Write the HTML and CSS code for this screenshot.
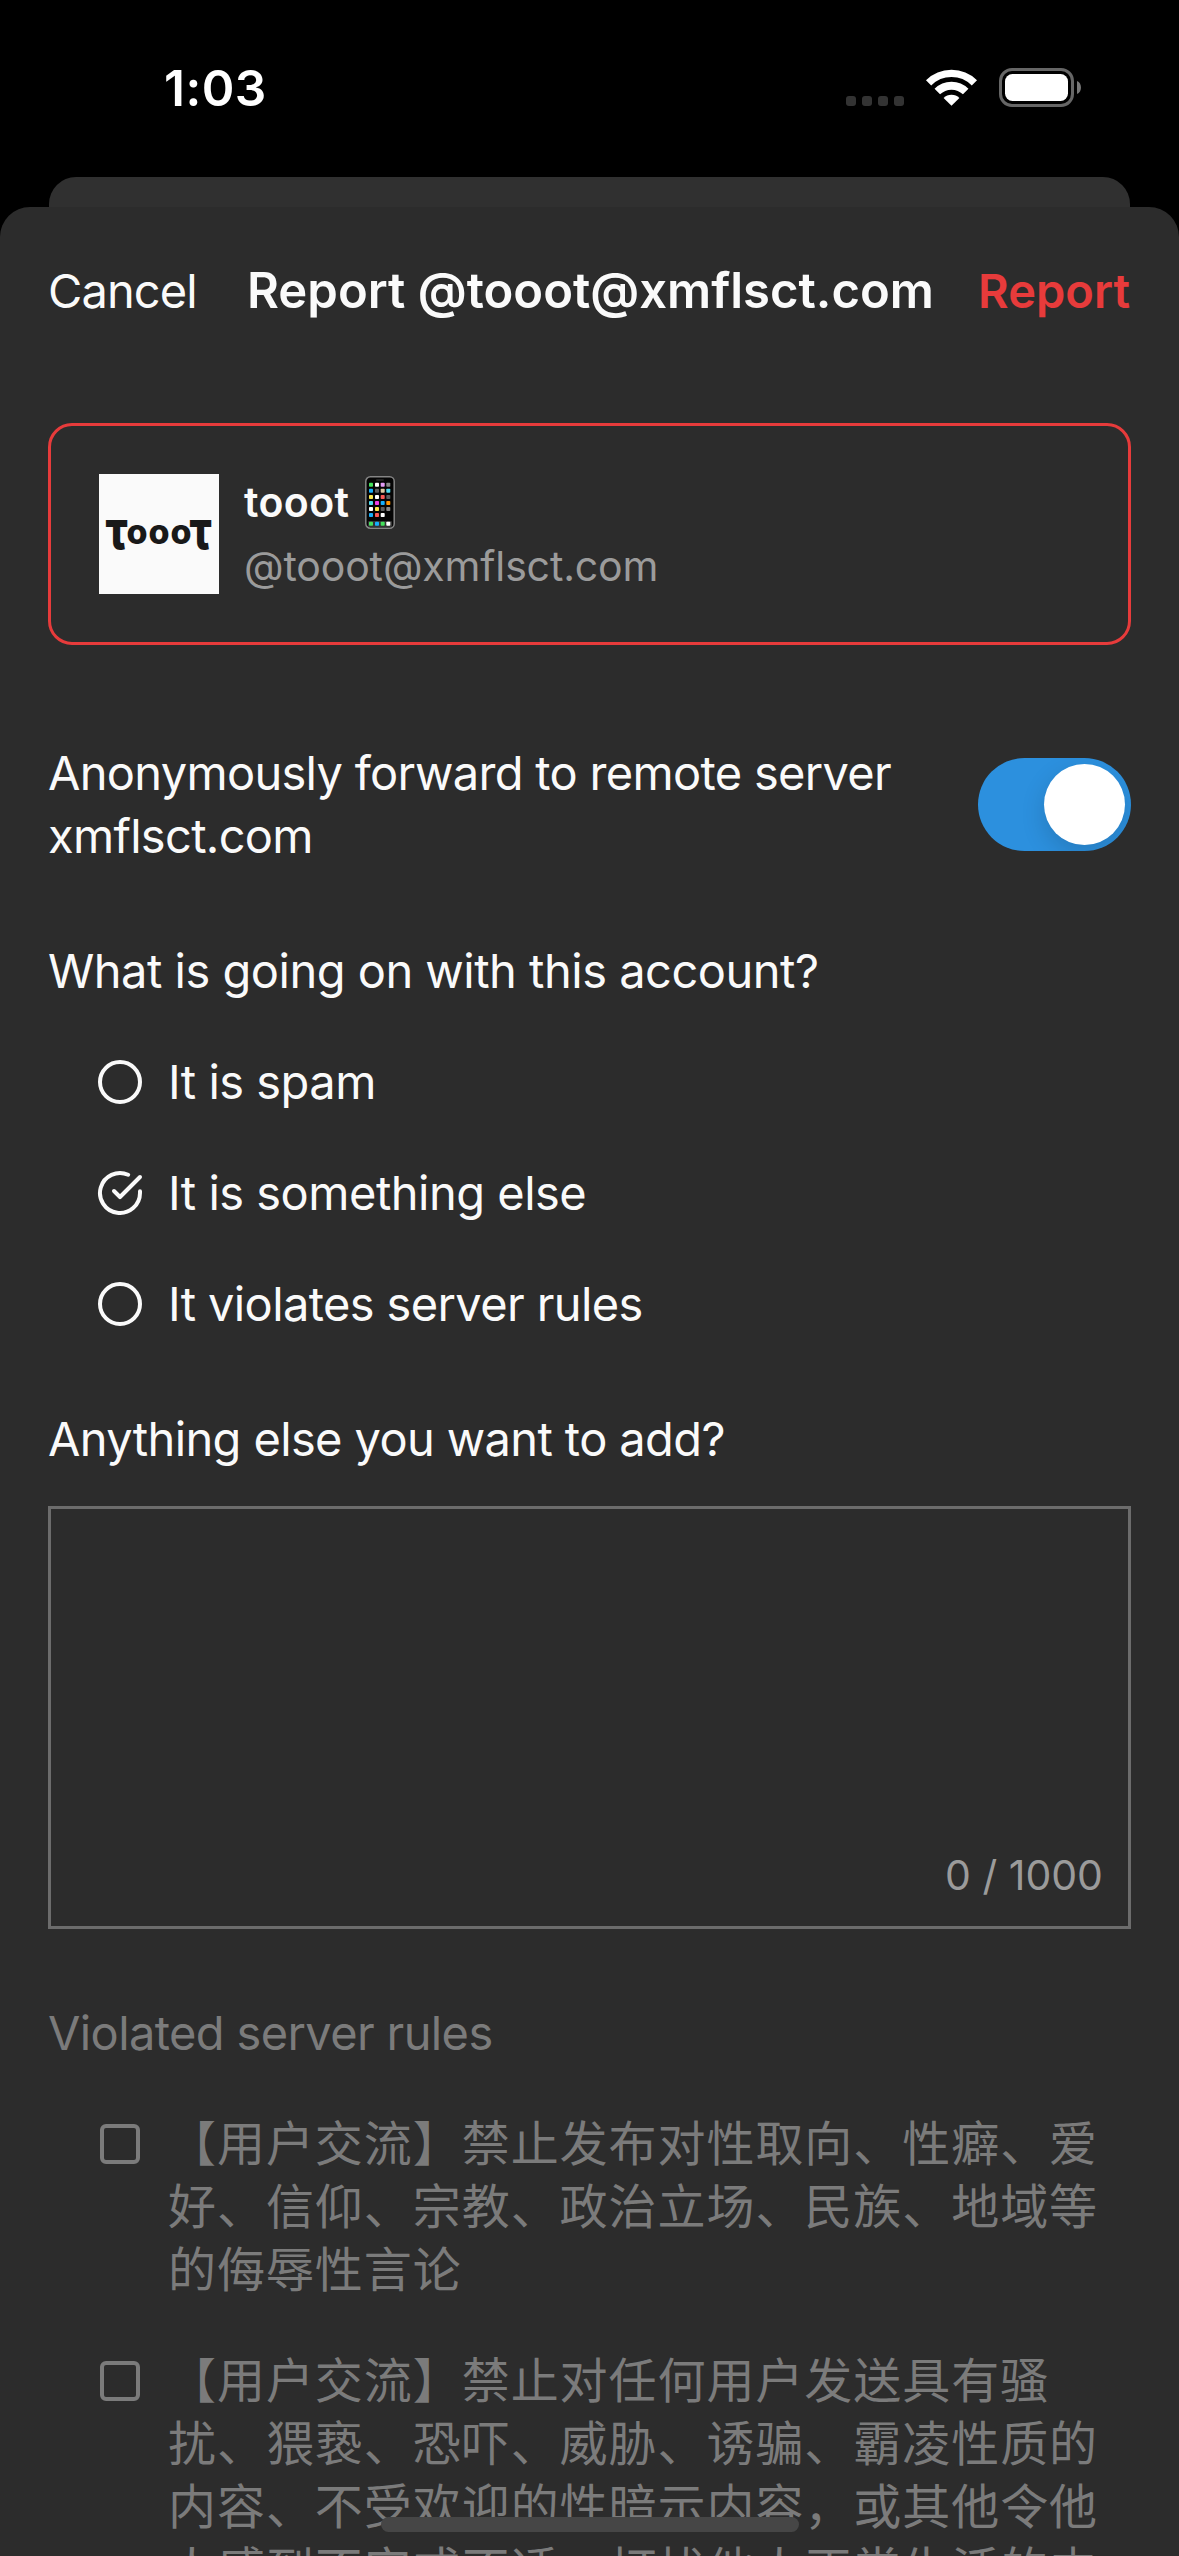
FILE: index.html
```html
<!DOCTYPE html>
<html lang="en">
<head>
<meta charset="utf-8">
<title>Report</title>
<link rel="stylesheet" href="styles.css">
</head>
<body>
<div class="screen">
  <header class="statusbar">
    <span class="time">1:03</span>
    <svg class="status-icons" width="240" height="40" viewBox="0 0 240 40" aria-hidden="true">
      <g fill="#333">
        <rect x="3" y="28" width="10" height="10" rx="3"/>
        <rect x="19" y="28" width="10" height="10" rx="3"/>
        <rect x="35" y="28" width="10" height="10" rx="3"/>
        <rect x="51" y="28" width="10" height="10" rx="3"/>
      </g>
      <g fill="none" stroke="#fff">
        <path d="M85.6 14.9a32.4 32.4 0 0 1 45.8 0" stroke-width="7.4"/>
        <path d="M94.3 23.6a20.1 20.1 0 0 1 28.4 0" stroke-width="7.8"/>
      </g>
      <path d="M108.500 37.800L100.600 29.900a11.200 11.200 0 0 1 15.800 0z" fill="#fff"/>
      <rect x="157.500" y="1.500" width="72" height="36" rx="11.500" fill="none" stroke="#666" stroke-width="3"/>
      <rect x="162" y="6" width="63" height="27" rx="7.500" fill="#fff"/>
      <path d="M234 13c5.300 1.700 5.300 11.300 0 13z" fill="#777"/>
    </svg>
  </header>
  <div class="back-card"></div>
  <main class="sheet">
    <nav class="navbar">
      <span class="cancel">Cancel</span>
      <h1 class="title">Report @tooot@xmflsct.com</h1>
      <span class="submit">Report</span>
    </nav>

    <section class="account">
      <svg class="avatar" width="120" height="120" viewBox="0 0 120 120" role="img" aria-label="tooot">
        <rect width="120" height="120" fill="#fafafa"/>
        <g class="wordmark">
          <text class="tau" transform="translate(6.500 74.500) scale(.79 1)">τ</text>
          <text class="o" x="38" y="70">o</text>
          <text class="o" x="60" y="70">o</text>
          <text class="o" x="82" y="70">o</text>
          <text class="tau" transform="translate(90.500 74.500) scale(.79 1)">τ</text>
        </g>
      </svg>
      <div class="identity">
        <div class="name">tooot
          <svg class="phone" width="30" height="53" viewBox="0 0 30 53" role="img" aria-label="mobile phone">
            <rect x=".8" y=".8" width="28.400" height="51.400" rx="4.500" fill="#050505" stroke="#858585" stroke-width="1.500"/>
            <rect x="11" y="3" width="8" height="2" rx="1" fill="#222"/>
            <rect x="3" y="45" width="24" height="6" rx="1" fill="#333"/>
            <g fill="#43e05b"><rect x="4" y="6.700" width="4" height="4" rx=".8"/><rect x="4" y="45.800" width="4" height="4" rx=".8"/><rect x="15.700" y="45.800" width="4" height="4" rx=".8"/></g>
            <g fill="#fff"><rect x="10" y="6.700" width="4" height="4" rx=".8"/><rect x="10" y="19" width="4" height="4" rx=".8"/><rect x="4" y="31" width="4" height="4" rx=".8"/><rect x="15.700" y="37" width="4" height="4" rx=".8"/><rect x="21.300" y="45.800" width="4" height="4" rx=".8"/></g>
            <g fill="#888"><rect x="21.300" y="6.700" width="4" height="4" rx=".8"/><rect x="21.300" y="31" width="4" height="4" rx=".8"/></g>
            <g fill="#5c5c5c"><rect x="10" y="12.700" width="4" height="4" rx=".8"/><rect x="21.300" y="19" width="4" height="4" rx=".8"/><rect x="15.700" y="31" width="4" height="4" rx=".8"/></g>
            <g fill="#15aefb"><rect x="4" y="12.700" width="4" height="4" rx=".8"/><rect x="15.700" y="25" width="4" height="4" rx=".8"/><rect x="4" y="37" width="4" height="4" rx=".8"/><rect x="10" y="45.800" width="4" height="4" rx=".8"/></g>
            <g fill="#4fdcf0"><rect x="21.300" y="12.700" width="4" height="4" rx=".8"/><rect x="4" y="25" width="4" height="4" rx=".8"/></g>
            <g fill="#fbe94b"><rect x="4" y="19" width="4" height="4" rx=".8"/><rect x="10" y="31" width="4" height="4" rx=".8"/></g>
            <g fill="#fa5a55"><rect x="15.700" y="19" width="4" height="4" rx=".8"/><rect x="10" y="37" width="4" height="4" rx=".8"/></g>
            <rect x="15.700" y="6.700" width="4" height="4" rx=".8" fill="#e29cf5"/>
            <rect x="15.700" y="12.700" width="4" height="4" rx=".8" fill="#ddc9a3"/>
            <rect x="10" y="25" width="4" height="4" rx=".8" fill="#f03fe8"/>
            <rect x="21.300" y="25" width="4" height="4" rx=".8" fill="#ff9500"/>
          </svg>
        </div>
        <div class="handle">@tooot@xmflsct.com</div>
      </div>
    </section>

    <section class="forward">
      <p class="forward-label">Anonymously forward to remote server<br>xmflsct.com</p>
      <span class="switch"><span class="knob"></span></span>
    </section>

    <h2 class="heading question">What is going on with this account?</h2>
    <ul class="options">
      <li class="option">
        <svg class="icon" viewBox="0 0 24 24"><circle cx="12" cy="12" r="10"/></svg>
        <span class="near">It is spam</span>
      </li>
      <li class="option">
        <svg class="icon" viewBox="0 0 24 24"><path d="M22 11.080V12a10 10 0 1 1-5.930-9.140"/><path d="M22 4L12 14.010l-3-3"/></svg>
        <span class="near">It is something else</span>
      </li>
      <li class="option">
        <svg class="icon" viewBox="0 0 24 24"><circle cx="12" cy="12" r="10"/></svg>
        <span>It violates server rules</span>
      </li>
    </ul>

    <h2 class="heading">Anything else you want to add?</h2>
    <div class="comment"><span class="counter">0 / 1000</span></div>

    <section class="rules">
      <h2 class="heading">Violated server rules</h2>
      <ul class="options">
        <li class="option">
          <svg class="icon" viewBox="0 0 24 24"><rect x="3" y="3" width="18" height="18" rx="2"/></svg>
          <span class="rule" lang="zh-CN">【用户交流】禁止发布对性取向、性癖、爱<br>好、信仰、宗教、政治立场、民族、地域等<br>的侮辱性言论</span>
        </li>
        <li class="option">
          <svg class="icon" viewBox="0 0 24 24"><rect x="3" y="3" width="18" height="18" rx="2"/></svg>
          <span class="rule" lang="zh-CN">【用户交流】禁止对任何用户发送具有骚<br>扰、猥亵、恐吓、威胁、诱骗、霸凌性质的<br>内容、不受欢迎的性暗示内容，或其他令他<br>人感到不安或不适、打扰他人正常生活的内</span>
        </li>
      </ul>
    </section>
  </main>
  <div class="home-indicator"></div>
</div>
</body>
</html>
```

FILE: styles.css
```css
* {
  box-sizing: border-box;
  margin: 0;
  padding: 0;
}

body {
  background: #000;
  color: #fafafa;
  font: 400 47px/63px Inter, "Noto Sans CJK SC", sans-serif;
  letter-spacing: -0.62px;
}

.screen {
  position: relative;
  display: flex;
  flex-direction: column;
  width: 1179px;
  height: 2556px;
  overflow: hidden;
}

.statusbar {
  display: flex;
  justify-content: space-between;
  align-items: flex-start;
  flex: none;
  height: 177px;
  padding: 57px 96px 0 164px;
}

.time {
  color: #fff;
  font-size: 49.5px;
  font-weight: 600;
  letter-spacing: 0.5px;
}

.status-icons {
  margin-top: 11px;
}

.back-card {
  flex: none;
  height: 60px;
  margin: 0 49px -30px;
  border-radius: 27px 27px 0 0;
  background: #303030;
}

.sheet {
  flex: none;
  height: 2349px;
  padding: 52px 48px 0;
  border-radius: 30px 30px 0 0;
  background: #2c2c2c;
  overflow: hidden;
  position: relative;
}

.navbar {
  display: grid;
  grid-template-columns: 1fr auto 1fr;
  align-items: baseline;
  height: 63px;
  margin-bottom: 101px;
  white-space: nowrap;
}

.cancel {
  letter-spacing: -0.9px;
}

.title {
  padding-left: 2px;
  font-size: 49px;
  font-weight: 600;
  letter-spacing: 0;
}

.submit {
  justify-self: end;
  padding-right: 1px;
  color: #e73b3b;
  font-weight: 600;
  letter-spacing: 0;
}

.account {
  display: flex;
  align-items: center;
  gap: 25px;
  height: 222px;
  padding: 0 48px;
  border: 3px solid #e73b3b;
  border-radius: 24px;
}

.avatar {
  flex: none;
}

.wordmark {
  fill: #191919;
  font-weight: 800;
  letter-spacing: 0;
}

.tau {
  font-size: 53px;
}

.o {
  font-size: 34px;
  text-anchor: middle;
}

.identity {
  font-size: 41px;
  letter-spacing: -0.15px;
}

.name {
  display: flex;
  align-items: center;
  gap: 16px;
  height: 63px;
  font-weight: 600;
  letter-spacing: 0.4px;
}

.handle {
  padding-top: 1px;
  margin-bottom: -1px;
  color: #9b9b9b;
}

.forward {
  display: flex;
  justify-content: space-between;
  align-items: center;
  margin: 96px 0 72px;
}

.forward-label {
  letter-spacing: -0.69px;
}

.switch {
  display: flex;
  justify-content: flex-end;
  width: 153px;
  height: 93px;
  padding: 6px;
  border-radius: 47px;
  background: #2c90de;
  overflow: hidden;
}

.knob {
  width: 81px;
  height: 81px;
  border-radius: 50%;
  background: #fff;
  box-shadow: 0 9px 24px rgba(0, 0, 0, 0.15);
}

.heading {
  font-size: inherit;
  font-weight: 400;
}

.question,
.near {
  letter-spacing: -0.5px;
}

.options {
  display: flex;
  flex-direction: column;
  gap: 48px;
  margin: 48px 0 72px;
  padding-left: 48px;
  list-style: none;
}

.option {
  display: flex;
  align-items: flex-start;
  gap: 24px;
  white-space: nowrap;
}

.icon {
  flex: none;
  width: 48px;
  height: 48px;
  margin-top: 8px;
  fill: none;
  stroke: currentColor;
  stroke-width: 2;
  stroke-linecap: round;
  stroke-linejoin: round;
}

.comment {
  display: flex;
  justify-content: flex-end;
  align-items: flex-end;
  height: 423px;
  margin: 36px 0 72px;
  padding: 0 25px 19px;
  border: 3px solid #6c6c6c;
}

.counter {
  color: #9b9b9b;
  font-size: 41px;
  letter-spacing: 0;
}

.rules {
  color: #7b7b7b;
}

.rule {
  font-size: 48px;
  letter-spacing: 0.95px;
  text-spacing-trim: space-all;
}

.home-indicator {
  position: absolute;
  left: 381px;
  bottom: 24px;
  width: 418px;
  height: 15px;
  border-radius: 8px;
  background: #464646;
}
```
